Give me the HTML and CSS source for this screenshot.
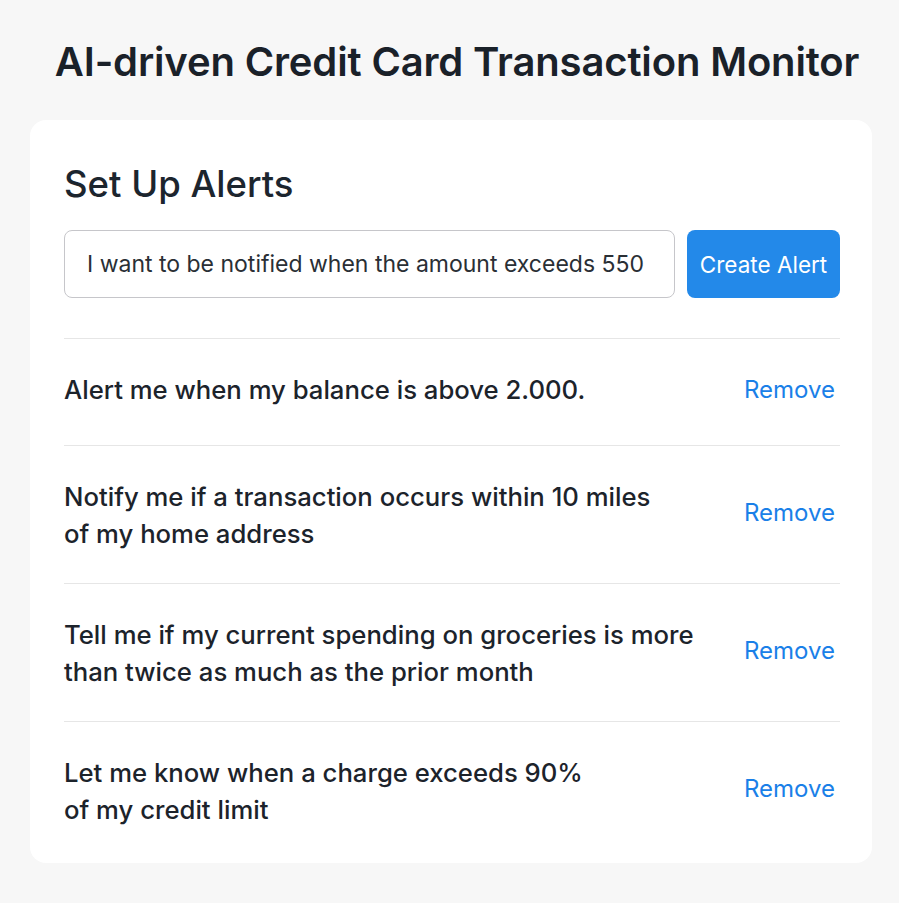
FILE: index.html
```html
<!DOCTYPE html>
<html lang="en">
<head>
<meta charset="utf-8">
<title>AI-driven Credit Card Transaction Monitor</title>
<link rel="stylesheet" href="styles.css">
</head>
<body>
<main class="page">
  <h1 class="title">AI-driven Credit Card Transaction Monitor</h1>
  <section class="card">
    <h2 class="card-title">Set Up Alerts</h2>
    <form class="create-form">
      <input class="alert-input" type="text" value="I want to be notified when the amount exceeds 550">
      <button class="create-btn" type="button">Create Alert</button>
    </form>
    <ul class="alert-list">
      <li class="alert-row">
        <span class="alert-text">Alert me when my balance is above 2.000.</span>
        <a class="remove" href="#">Remove</a>
      </li>
      <li class="alert-row">
        <span class="alert-text">Notify me if a transaction occurs within 10 miles<br>of my home address</span>
        <a class="remove" href="#">Remove</a>
      </li>
      <li class="alert-row">
        <span class="alert-text">Tell me if my current spending on groceries is more<br>than twice as much as the prior month</span>
        <a class="remove" href="#">Remove</a>
      </li>
      <li class="alert-row">
        <span class="alert-text">Let me know when a charge exceeds 90%<br>of my credit limit</span>
        <a class="remove" href="#">Remove</a>
      </li>
    </ul>
  </section>
</main>
</body>
</html>
```
FILE: styles.css
```css
* { box-sizing: border-box; }
html, body { margin: 0; padding: 0; }
body {
  background: #f7f7f7;
  font-family: Inter, "Noto Sans", "Liberation Sans", sans-serif;
  color: #1c232b;
}
.page {
  padding: 36px 27px 38px 30px;
}
.title {
  margin: 0;
  padding-left: 12px;
  text-align: center;
  font-size: 40px;
  font-weight: 600;
  line-height: 52px;
  letter-spacing: -0.15px;
  color: #1a2129;
}
.card {
  margin-top: 32px;
  background: #ffffff;
  border-radius: 16px;
  padding: 40px 32px 4px 34px;
}
.card-title {
  margin: 0;
  font-size: 36.5px;
  font-weight: 500;
  line-height: 48px;
  color: #1c252e;
}
.create-form {
  display: flex;
  gap: 12px;
  margin-top: 22px;
  padding-bottom: 40px;
  border-bottom: 1px solid #e6e6e6;
}
.alert-input {
  flex: 1;
  height: 68px;
  border: 1px solid #c6c6ca;
  border-radius: 8px;
  padding: 0 22px;
  font-family: inherit;
  font-size: 23px;
  color: #2a2f35;
  background: #fff;
}
.create-btn {
  width: 153px;
  height: 68px;
  border: none;
  border-radius: 8px;
  background: #2389e9;
  color: #fff;
  font-family: inherit;
  font-size: 22.5px;
  font-weight: 400;
}
.alert-list {
  list-style: none;
  margin: 0;
  padding: 0;
}
.alert-row {
  display: flex;
  align-items: center;
  justify-content: space-between;
  padding: 32px 5px 31px 0;
  border-bottom: 1px solid #e6e6e6;
  min-height: 107px;
}
.alert-row:last-child { border-bottom: none; }
.alert-text {
  align-self: flex-start;
  font-size: 25.7px;
  line-height: 37px;
  font-weight: 500;
  color: #1c232b;
}
.remove {
  margin-bottom: 6px;
  font-size: 24px;
  color: #1a80e8;
  text-decoration: none;
  font-weight: 400;
}
```
